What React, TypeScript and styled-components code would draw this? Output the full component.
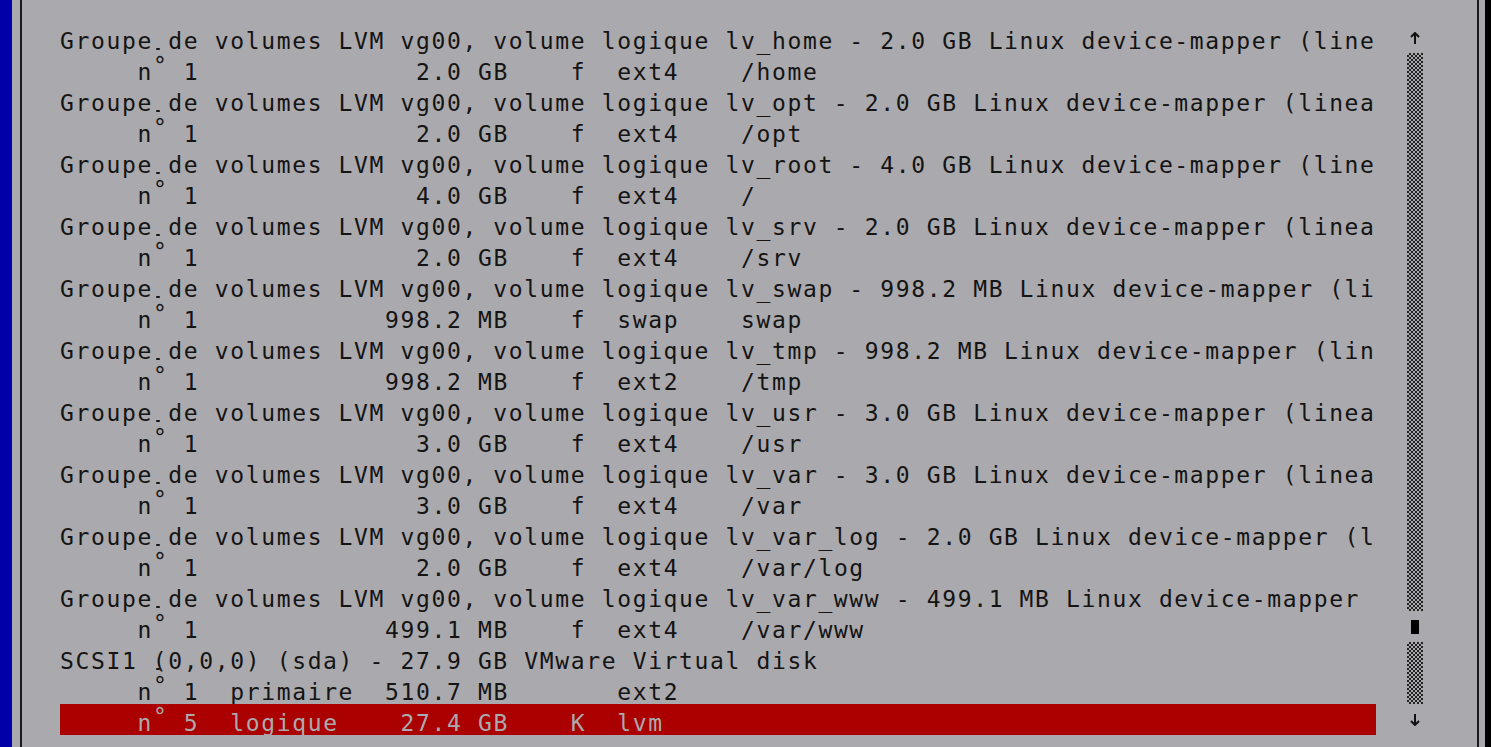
import React from 'react';
import styled, { createGlobalStyle } from 'styled-components';

const GlobalStyle = createGlobalStyle`
  html, body {
    margin: 0;
    padding: 0;
    background: #aaa9ad;
  }
`

type Line =
  | { kind: 'head'; text: string }
  | { kind: 'part'; num: string; type?: string; size: string; flag?: string; fs: string; mount?: string; selected?: boolean }

const lvm = (lv: string, size: string, tail: string) =>
  `Groupe de volumes LVM vg00, volume logique ${lv} - ${size} Linux device-mapper${tail}`

const lines: Line[] = [
  { kind: 'head', text: lvm('lv_home', '2.0 GB', ' (line') },
  { kind: 'part', num: '1', size: '2.0 GB', flag: 'f', fs: 'ext4', mount: '/home' },
  { kind: 'head', text: lvm('lv_opt', '2.0 GB', ' (linea') },
  { kind: 'part', num: '1', size: '2.0 GB', flag: 'f', fs: 'ext4', mount: '/opt' },
  { kind: 'head', text: lvm('lv_root', '4.0 GB', ' (line') },
  { kind: 'part', num: '1', size: '4.0 GB', flag: 'f', fs: 'ext4', mount: '/' },
  { kind: 'head', text: lvm('lv_srv', '2.0 GB', ' (linea') },
  { kind: 'part', num: '1', size: '2.0 GB', flag: 'f', fs: 'ext4', mount: '/srv' },
  { kind: 'head', text: lvm('lv_swap', '998.2 MB', ' (li') },
  { kind: 'part', num: '1', size: '998.2 MB', flag: 'f', fs: 'swap', mount: 'swap' },
  { kind: 'head', text: lvm('lv_tmp', '998.2 MB', ' (lin') },
  { kind: 'part', num: '1', size: '998.2 MB', flag: 'f', fs: 'ext2', mount: '/tmp' },
  { kind: 'head', text: lvm('lv_usr', '3.0 GB', ' (linea') },
  { kind: 'part', num: '1', size: '3.0 GB', flag: 'f', fs: 'ext4', mount: '/usr' },
  { kind: 'head', text: lvm('lv_var', '3.0 GB', ' (linea') },
  { kind: 'part', num: '1', size: '3.0 GB', flag: 'f', fs: 'ext4', mount: '/var' },
  { kind: 'head', text: lvm('lv_var_log', '2.0 GB', ' (l') },
  { kind: 'part', num: '1', size: '2.0 GB', flag: 'f', fs: 'ext4', mount: '/var/log' },
  { kind: 'head', text: lvm('lv_var_www', '499.1 MB', '') },
  { kind: 'part', num: '1', size: '499.1 MB', flag: 'f', fs: 'ext4', mount: '/var/www' },
  { kind: 'head', text: 'SCSI1 (0,0,0) (sda) - 27.9 GB VMware Virtual disk' },
  { kind: 'part', num: '1', type: 'primaire', size: '510.7 MB', fs: 'ext2' },
  { kind: 'part', num: '5', type: 'logique', size: '27.4 GB', flag: 'K', fs: 'lvm', selected: true },
]

// columns of the partman table, counted in characters
const partText = (l: Extract<Line, { kind: 'part' }>) => {
  let s = `     n  ${l.num}  ${l.type ?? ''}`
  s = s.padEnd(29 - l.size.length) + l.size
  s = s.padEnd(33) + (l.flag ?? '')
  s = s.padEnd(36) + l.fs
  s = s.padEnd(44) + (l.mount ?? '')
  return s.trimEnd()
}

const UpArrow = () => (
  <svg width="10" height="12" viewBox="0 0 10 12">
    <path d="M5 1 V12 M1 5 L5 1 L9 5" stroke="#111" strokeWidth="2" fill="none" />
  </svg>
)

const DownArrow = () => (
  <svg width="10" height="12" viewBox="0 0 10 12">
    <path d="M5 0 V11 M1 7 L5 11 L9 7" stroke="#111" strokeWidth="2" fill="none" />
  </svg>
)

const App: React.FC = () => {
  return (
    <Screen>
      <GlobalStyle />
      <Desktop />
      <Window>
        <Frame>
          <List>
            {lines.map((l, i) => {
              if (l.kind === 'head') return <Row key={i}>{l.text}</Row>
              const t = partText(l)
              return (
                <Row key={i} selected={l.selected}>
                  {t.slice(0, 6)}
                  <Degree selected={l.selected}>°</Degree>
                  {t.slice(7)}
                </Row>
              )
            })}
          </List>
          <Scrollbar>
            <ArrowCell><UpArrow /></ArrowCell>
            <Track rows={18} />
            <ThumbCell><Thumb /></ThumbCell>
            <Track rows={2} />
            <ArrowCell><DownArrow /></ArrowCell>
          </Scrollbar>
        </Frame>
      </Window>
      <Shadow />
    </Screen>
  )
}

const Screen = styled.div`
  display: flex;
  width: 1491px;
  height: 747px;
  overflow: hidden;
  background: #aaa9ad;
`
const Desktop = styled.div`
  width: 12px;
  flex: none;
  background: #0000a8;
`
const Window = styled.div`
  flex: 1;
  display: flex;
  padding: 0 6px 0 8px;
  background: #aaa9ad;
`
const Frame = styled.div`
  flex: 1;
  display: flex;
  border-left: 2px solid #1a1a1a;
  border-right: 2px solid #1a1a1a;
  padding: 22px 0 0 38px;
`
const List = styled.div`
  width: 1316px;
  flex: none;
  display: flex;
  flex-direction: column;
`
const Row = styled.div<{ selected?: boolean }>`
  height: 31px;
  box-sizing: border-box;
  padding-top: 7px;
  font-family: "DejaVu Sans Mono", "Liberation Mono", monospace;
  font-size: 23px;
  line-height: 24px;
  letter-spacing: 1.63px;
  white-space: pre;
  color: ${p => (p.selected ? '#aaa9ad' : '#141414')};
  background: ${p => (p.selected ? '#aa0000' : 'transparent')};
`
const Degree = styled.span<{ selected?: boolean }>`
  position: relative;
  top: -7px;
  &::before {
    content: '';
    position: absolute;
    left: 3px;
    top: -4px;
    width: 4px;
    height: 2px;
    border-radius: 1px;
    background: ${p => (p.selected ? '#aaa9ad' : '#141414')};
  }
`
const Scrollbar = styled.div`
  margin-left: 31px;
  width: 16px;
  flex: none;
  display: flex;
  flex-direction: column;
`
const ArrowCell = styled.div`
  height: 31px;
  display: flex;
  align-items: center;
  justify-content: center;
`
const Track = styled.div<{ rows: number }>`
  height: ${p => p.rows * 31}px;
  background: repeating-conic-gradient(#222 0 25%, transparent 0 50%) 0 0 / 4px 4px;
`
const ThumbCell = styled.div`
  height: 31px;
  display: flex;
  align-items: center;
  justify-content: center;
`
const Thumb = styled.div`
  width: 8px;
  height: 14px;
  background: #000;
`
const Shadow = styled.div`
  width: 6px;
  flex: none;
  background: #000;
`

export default App
